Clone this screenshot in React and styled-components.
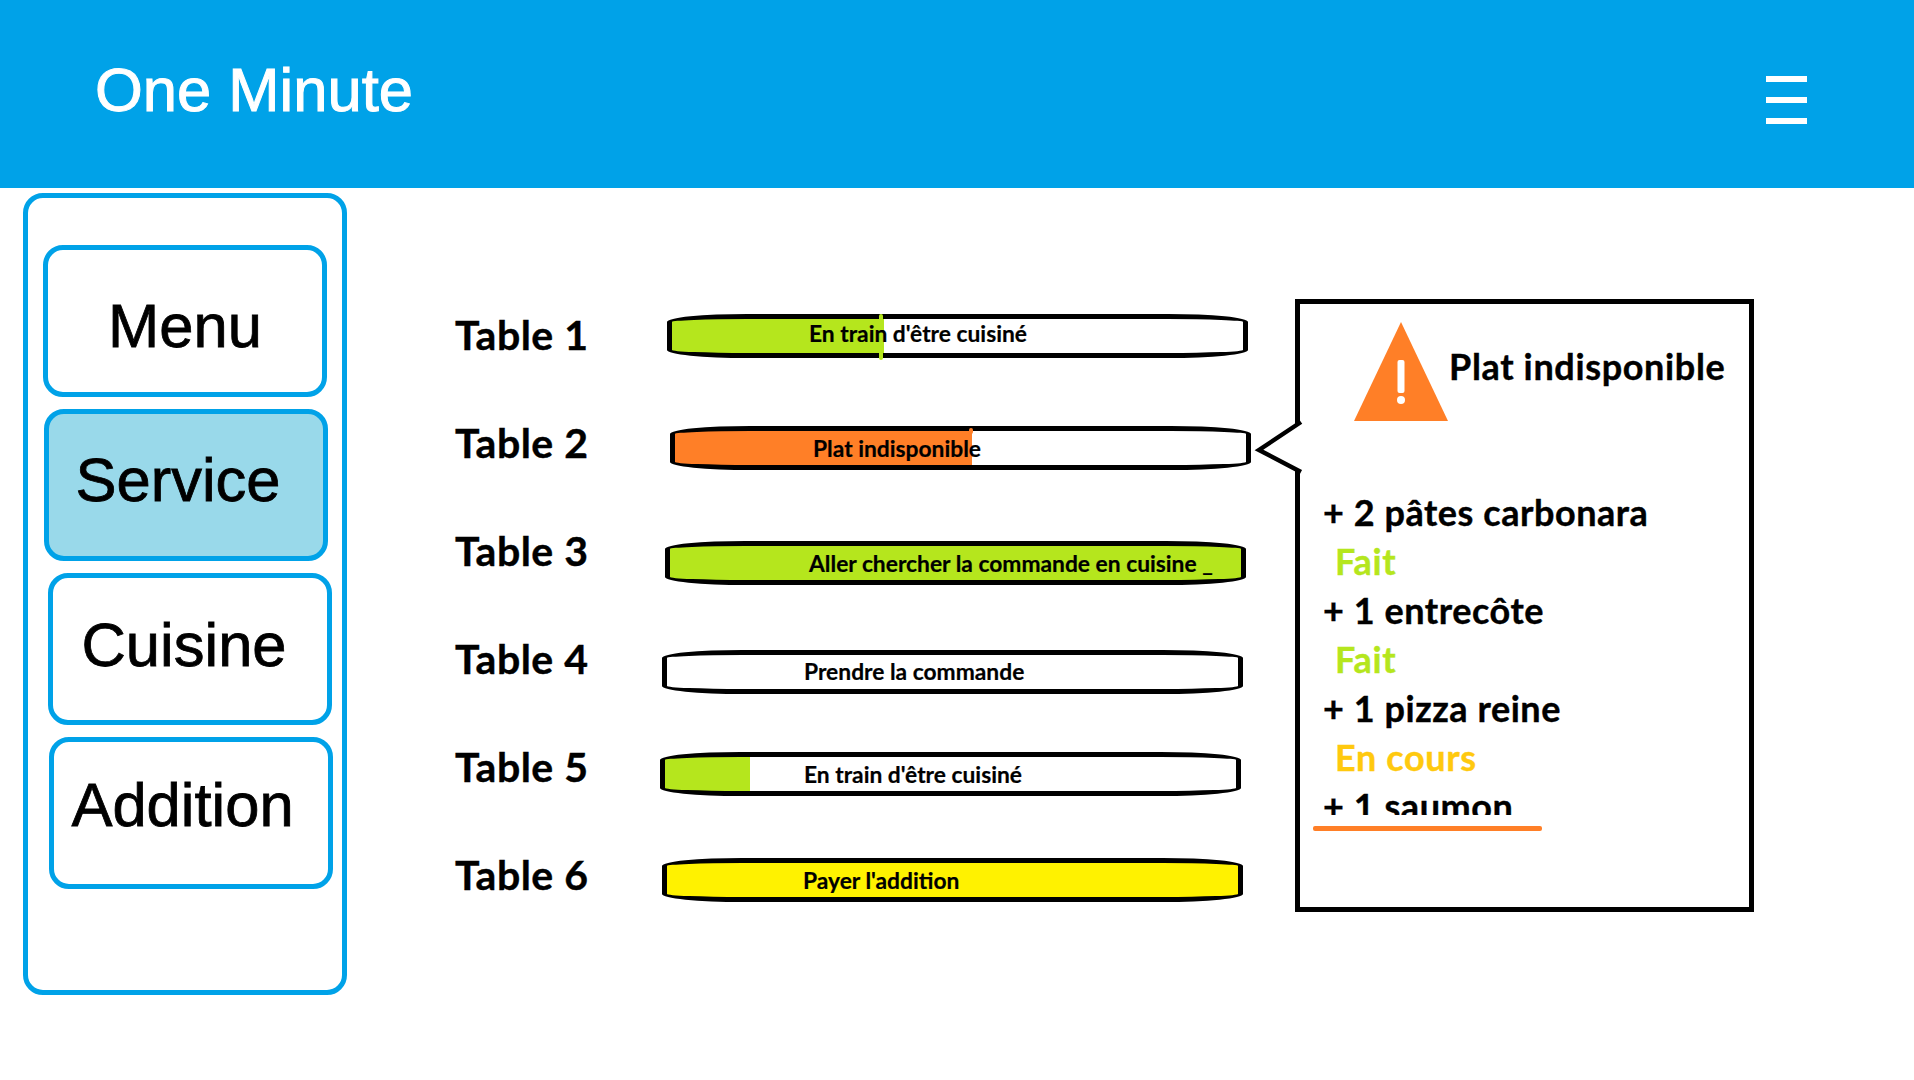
import React from "react";
import styled, { createGlobalStyle } from "styled-components";

const GlobalStyle = createGlobalStyle`
  html, body {
    margin: 0;
    padding: 0;
    background: #fff;
  }
`;

const Header = styled.header`
  display: flex;
  justify-content: space-between;
  height: 188px;
  background: #00a2e8;
`;

const Title = styled.h1`
  margin: 54px 0 0 95px;
  font: 400 61.5px/72px "Liberation Sans", Arial, sans-serif;
  color: #fff;
  -webkit-text-stroke: 1px #fff;
`;

const Burger = styled.div`
  display: flex;
  flex-direction: column;
  gap: 15px;
  width: 41px;
  margin: 76px 107px 0 0;
`;

const BurgerLine = styled.span`
  height: 6px;
  background: #fff;
`;

const Main = styled.main`
  display: flex;
  align-items: flex-start;
`;

const Sidebar = styled.nav`
  box-sizing: border-box;
  width: 324px;
  height: 802px;
  margin: 5px 0 0 23px;
  padding-top: 47px;
  border: 5px solid #00a2e8;
  border-radius: 20px;
  display: flex;
  flex-direction: column;
  gap: 12px;
`;

const NavButton = styled.a`
  box-sizing: border-box;
  display: block;
  width: 284px;
  height: 152px;
  margin-left: ${(p) => p.$left}px;
  padding-top: ${(p) => p.$top}px;
  padding-right: ${(p) => p.$right}px;
  border: 5px solid #00a2e8;
  border-radius: 20px;
  background: ${(p) => (p.$active ? "#99d9ea" : "#fff")};
  font: 400 61.5px/70px "Liberation Sans", Arial, sans-serif;
  -webkit-text-stroke: 0.8px #000;
  color: #000;
  text-align: center;
`;

const TableLabels = styled.div`
  width: 205px;
  margin: 92px 0 0 108px;
  flex: none;
`;

const TableLabel = styled.div`
  height: 108px;
  display: flex;
  align-items: center;
  font: 700 41px "Lato", sans-serif;
  letter-spacing: 0.5px;
  -webkit-text-stroke: 0.4px #000;
  color: #000;
`;

const Bars = styled.div`
  width: 591px;
  flex: none;
`;

const BarWrap = styled.div`
  position: relative;
  width: 581px;
  margin-top: ${(p) => p.$top}px;
  margin-left: ${(p) => p.$left}px;
`;

const Bar = styled.div`
  box-sizing: border-box;
  height: 44px;
  padding-left: ${(p) => p.$inset}px;
  padding-bottom: ${(p) => p.$lift}px;
  display: flex;
  align-items: center;
  border: 5px solid #000;
  border-radius: 80px / 8px;
  background: linear-gradient(
    to right,
    ${(p) => p.$color} ${(p) => p.$fill},
    #fff ${(p) => p.$fill}
  );
`;

const BarText = styled.span`
  position: relative;
  z-index: 2;
  font: 700 22.8px "Lato", sans-serif;
  -webkit-text-stroke: 0.2px #000;
  color: #000;
  white-space: pre;
`;

const Tick = styled.span`
  position: absolute;
  z-index: 1;
  top: ${(p) => p.$y}px;
  left: ${(p) => p.$x}px;
  width: 4px;
  height: ${(p) => p.$h}px;
  background: ${(p) => p.$color};
  border-radius: 2px;
`;

const Panel = styled.aside`
  position: relative;
  box-sizing: border-box;
  flex: none;
  width: 459px;
  height: 613px;
  margin: 111px 0 0 44px;
  border: 5px solid #000;
`;

const Tail = styled.svg`
  position: absolute;
  left: -49px;
  top: 110px;
`;

const PanelHead = styled.div`
  display: flex;
  align-items: flex-start;
  padding: 18px 0 0 54px;
`;

const PanelTitle = styled.div`
  margin: 21px 0 0 1px;
  font: 700 36px/46px "Lato", sans-serif;
  letter-spacing: 0.65px;
  -webkit-text-stroke: 0.4px #000;
  color: #000;
`;

const Items = styled.div`
  height: 327px;
  margin: 67px 0 0 23px;
  overflow: hidden;
`;

const Dish = styled.div`
  font: 700 36px/49px "Lato", sans-serif;
  letter-spacing: 0.55px;
  -webkit-text-stroke: 0.4px #000;
  color: #000;
`;

const Status = styled.div`
  margin-left: 12px;
  font: 700 36px/49px "Lato", sans-serif;
  letter-spacing: 0.65px;
  -webkit-text-stroke: 0.4px ${(p) => p.$color};
  color: ${(p) => p.$color};
`;

const Rule = styled.div`
  width: 229px;
  height: 5px;
  margin: 11px 0 0 13px;
  border-radius: 2px;
  background: #ff7f27;
`;

const GREEN = "#b5e61d";
const AMBER = "#ffc90e";
const ORANGE = "#ff7f27";

const navItems = [
  { label: "Menu", left: 15, top: 41, right: 0 },
  { label: "Service", left: 16, top: 31, right: 16, active: true },
  { label: "Cuisine", left: 20, top: 32, right: 12 },
  { label: "Addition", left: 21, top: 28, right: 17 },
];

const bars = [
  { text: "En train d'être cuisiné", color: GREEN, fill: "212px", top: 126, left: 7, inset: 137, lift: 7, tick: { x: 212, y: 0, h: 46, color: GREEN } },
  { text: "Plat indisponible", color: ORANGE, fill: "297px", top: 68, left: 10, inset: 138, lift: 0, tick: { x: 299, y: 2, h: 6, color: ORANGE } },
  { text: "Aller chercher la commande en cuisine _", color: GREEN, fill: "100%", top: 71, left: 5, inset: 139, lift: 0 },
  { text: "Prendre la commande", color: "#fff", fill: "100%", top: 65, left: 2, inset: 137, lift: 2 },
  { text: "En train d'être cuisiné", color: GREEN, fill: "85px", top: 58, left: 0, inset: 139, lift: 0 },
  { text: "Payer l'addition", color: "#fff200", fill: "100%", top: 62, left: 2, inset: 136, lift: 0 },
];

const App = () => (
  <>
    <GlobalStyle />
    <Header>
      <Title>One Minute</Title>
      <Burger>
        <BurgerLine />
        <BurgerLine />
        <BurgerLine />
      </Burger>
    </Header>
    <Main>
      <Sidebar>
        {navItems.map((item) => (
          <NavButton
            key={item.label}
            $left={item.left}
            $top={item.top}
            $right={item.right}
            $active={item.active}
          >
            {item.label}
          </NavButton>
        ))}
      </Sidebar>
      <TableLabels>
        {[1, 2, 3, 4, 5, 6].map((n) => (
          <TableLabel key={n}>Table {n}</TableLabel>
        ))}
      </TableLabels>
      <Bars>
        {bars.map((bar, i) => (
          <BarWrap key={i} $top={bar.top} $left={bar.left}>
            <Bar $color={bar.color} $fill={bar.fill} $inset={bar.inset} $lift={bar.lift}>
              <BarText>{bar.text}</BarText>
            </Bar>
            {bar.tick && <Tick $x={bar.tick.x} $y={bar.tick.y} $h={bar.tick.h} $color={bar.tick.color} />}
          </BarWrap>
        ))}
      </Bars>
      <Panel>
        <Tail width="56" height="68" viewBox="0 0 56 68">
          <polygon points="7,36 52,6 55,62" fill="#fff" />
          <polyline points="50,8 8,36 50,58" fill="none" stroke="#000" strokeWidth="4.5" />
        </Tail>
        <PanelHead>
          <svg width="94" height="99" viewBox="0 0 94 99">
            <polygon points="47,0 94,99 0,99" fill="#ff7f27" />
            <rect x="43.5" y="38" width="7" height="33" rx="2" fill="#fff" />
            <circle cx="47" cy="78" r="4" fill="#fff" />
          </svg>
          <PanelTitle>Plat indisponible</PanelTitle>
        </PanelHead>
        <Items>
          <Dish>+ 2 pâtes carbonara</Dish>
          <Status $color={GREEN}>Fait</Status>
          <Dish>+ 1 entrecôte</Dish>
          <Status $color={GREEN}>Fait</Status>
          <Dish>+ 1 pizza reine</Dish>
          <Status $color={AMBER}>En cours</Status>
          <Dish>+ 1 saumon</Dish>
        </Items>
        <Rule />
      </Panel>
    </Main>
  </>
);

export default App;
